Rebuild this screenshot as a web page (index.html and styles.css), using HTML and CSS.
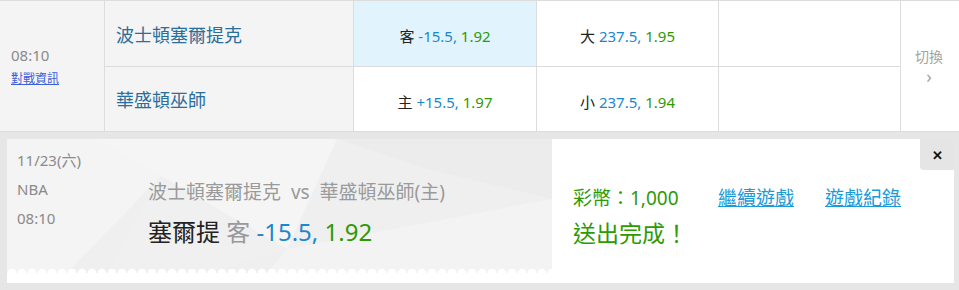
FILE: index.html
```html
<!DOCTYPE html>
<html lang="zh-Hant">
<head>
  <meta charset="UTF-8" />
  <title>投注完成</title>
  <link rel="stylesheet" href="styles.css">
</head>
<body>
  <div class="game">
    <div class="cell time-cell">
      <div class="time">08:10</div>
      <a href="#" class="info-link">對戰資訊</a>
    </div>
    <div class="cell team">波士頓塞爾提克</div>
    <div class="cell odds picked"><span>客 <span class="line">-15.5,</span> <span class="rate">1.92</span></span></div>
    <div class="cell odds"><span>大 <span class="line">237.5,</span> <span class="rate">1.95</span></span></div>
    <div class="cell odds"></div>
    <div class="cell switch">
      <div>切換</div>
      <div class="arrow">&#x203A;</div>
    </div>
    <div class="cell team row2">華盛頓巫師</div>
    <div class="cell odds row2"><span>主 <span class="line">+15.5,</span> <span class="rate">1.97</span></span></div>
    <div class="cell odds row2"><span>小 <span class="line">237.5,</span> <span class="rate">1.94</span></span></div>
    <div class="cell odds row2"></div>
  </div>

  <div class="result-wrap">
    <div class="result">
      <div class="ticket">
        <svg class="texture" viewBox="0 0 545 134" preserveAspectRatio="none">
          <polygon points="0,0 190,0 60,134 0,134" fill="#f4f4f4"/>
          <polygon points="90,0 330,0 280,110" fill="#f5f5f5"/>
          <polygon points="280,110 545,60 545,134 260,134" fill="#f3f3f3"/>
          <polygon points="330,0 545,0 545,60 420,30" fill="#ececec"/>
          <polygon points="150,40 280,110 200,134 100,134" fill="#f0f0f0"/>
        </svg>
        <div class="meta">
          <div>11/23(六)</div>
          <div>NBA</div>
          <div>08:10</div>
        </div>
        <div class="bet">
          <div class="match">波士頓塞爾提克 &nbsp;vs &nbsp;華盛頓巫師(主)</div>
          <div class="pick"><span class="pick-team">塞爾提</span> <span class="tag-grey">客</span> <span class="line">-15.5,</span> <span class="rate">1.92</span></div>
        </div>
      </div>
      <div class="status">
        <div class="status-row">
          <span class="coins">彩幣：1,000</span>
          <a href="#" class="status-link">繼續遊戲</a>
          <a href="#" class="status-link">遊戲紀錄</a>
        </div>
        <div class="done">送出完成！</div>
      </div>
      <button class="close">&#x2715;</button>
    </div>
  </div>
</body>
</html>
```

FILE: styles.css
```css
:root {
  --border: #dcdcdc;
  --cell-grey: #f4f4f4;
  --picked: #e1f4fd;
  --blue: #1a88cc;
  --green: #2e9a05;
  --team: #2a6e9c;
  --muted: #8a8a8a;
  --font: "Noto Sans", "Noto Sans CJK TC", sans-serif;
}
* { box-sizing: border-box; margin: 0; padding: 0; }
body { font-family: var(--font); background: #fff; width: 959px; }

.game {
  display: grid;
  grid-template-columns: 105px 249px 183px 182px 182px 58px;
  grid-template-rows: 66px 65px;
  border-top: 1px solid var(--border);
}
.cell {
  border-right: 1px solid var(--border);
  border-bottom: 1px solid var(--border);
  display: flex;
  align-items: center;
}
.time-cell {
  grid-row: 1 / 3;
  background: var(--cell-grey);
  flex-direction: column;
  align-items: flex-start;
  justify-content: center;
  padding-left: 11px;
}
.time { color: var(--muted); font-size: 15px; line-height: 22px; margin-bottom: 4px; }
.info-link { color: #3b5fd9; font-size: 12px; line-height: 18px; }
.team {
  background: var(--cell-grey);
  color: var(--team);
  font-size: 18px;
  padding-left: 11px;
}
.odds {
  justify-content: center;
  font-size: 15px;
  color: #222;
  padding-top: 4px;
}
.odds.picked { background: var(--picked); }
.line { color: var(--blue); }
.rate { color: var(--green); }
.switch {
  grid-row: 1 / 3;
  grid-column: 6;
  border-right: none;
  flex-direction: column;
  justify-content: center;
  color: #a3a3a3;
  font-size: 14px;
  line-height: 20px;
  padding-right: 2px;
}
.switch .arrow { font-size: 18px; line-height: 18px; }
.row2 { grid-row: 2; }

.result-wrap {
  background: #e6e6e6;
  padding: 7px 5px 8px 7px;
}
.result {
  position: relative;
  background: #fff;
  height: 144px;
  display: flex;
}
.ticket {
  position: relative;
  width: 545px;
  height: 134px;
  background: #efefef;
  display: flex;
  overflow: hidden;
}
.ticket::after {
  content: "";
  position: absolute;
  left: 0; right: 0; bottom: 0;
  height: 6px;
  background: radial-gradient(circle at 50% 100%, #fff 4px, transparent 4.6px) 0 0 / 10px 6px repeat-x;
}
.texture {
  position: absolute;
  left: 0; top: 0;
  width: 100%; height: 100%;
}
.meta {
  position: relative;
  width: 141px;
  padding: 7px 0 0 10px;
  color: var(--muted);
  font-size: 15px;
  line-height: 29px;
}
.bet { position: relative; padding-top: 40px; }
.match { color: #9a9a9a; font-size: 19px; line-height: 26px; }
.pick { font-size: 24px; line-height: 32px; margin-top: 11px; }
.pick-team { color: #222; }
.tag-grey { color: #999; }

.status {
  padding: 46px 0 0 21px;
}
.status-row { display: flex; align-items: center; font-size: 19px; line-height: 26px; }
.coins { color: var(--green); width: 145px; }
.status-link { color: #1b9ad8; margin-right: 31px; }
.done { color: var(--green); font-size: 23px; line-height: 32px; margin-top: 6px; }

.close {
  position: absolute;
  right: 0; top: 0;
  width: 34px; height: 31px;
  border: none;
  border-bottom-left-radius: 4px;
  background: #e5e5e5;
  font-size: 13px;
  font-weight: 700;
  color: #111;
  font-family: var(--font);
}
```
